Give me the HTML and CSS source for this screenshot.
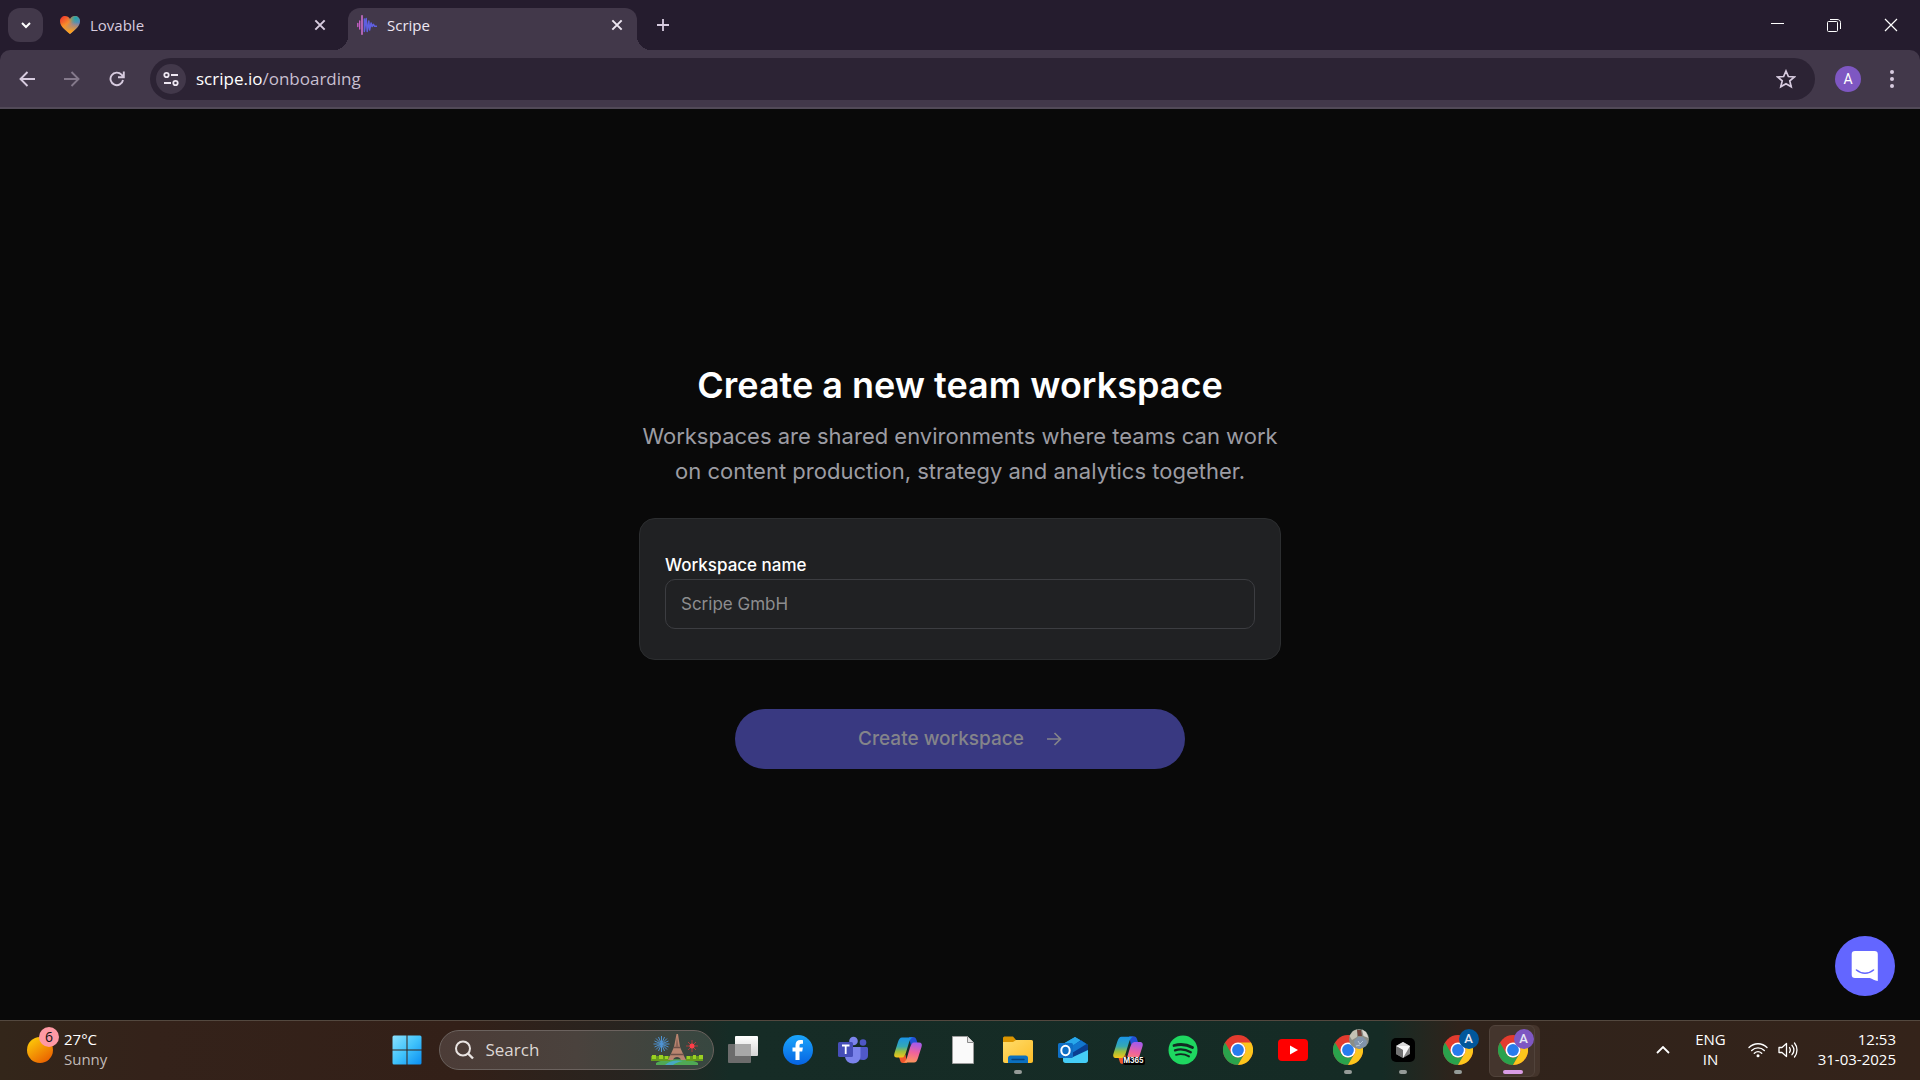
FILE: index.html
```html
<!DOCTYPE html>
<html lang="en">
<head>
<meta charset="utf-8">
<title>Scripe</title>
<link rel="stylesheet" href="styles.css">
</head>
<body>
<svg class="defs" aria-hidden="true">
  <defs>
    <linearGradient id="win" x1="0" y1="0" x2="1" y2="1"><stop offset="0" stop-color="#8be1fd"/><stop offset=".5" stop-color="#41c3fb"/><stop offset="1" stop-color="#0a8ef2"/></linearGradient>
    <linearGradient id="fb" x1="0" y1="0" x2="0" y2="1"><stop offset="0" stop-color="#1aa5fb"/><stop offset="1" stop-color="#0663e2"/></linearGradient>
    <linearGradient id="sun" x1="0" y1="0" x2=".7" y2="1"><stop offset="0" stop-color="#ffd60a"/><stop offset="1" stop-color="#ea6200"/></linearGradient>
    <linearGradient id="cpL" x1="0" y1="0" x2="0" y2="1"><stop offset="0" stop-color="#1a94e8"/><stop offset=".45" stop-color="#35a9b4"/><stop offset=".7" stop-color="#9bbf3c"/><stop offset="1" stop-color="#f7c51a"/></linearGradient>
    <linearGradient id="cpR" x1=".4" y1="0" x2=".2" y2="1"><stop offset="0" stop-color="#a85be8"/><stop offset=".45" stop-color="#f0629c"/><stop offset="1" stop-color="#fd9b55"/></linearGradient>
    <linearGradient id="folder" x1="0" y1="0" x2="1" y2="1"><stop offset="0" stop-color="#ffdc6b"/><stop offset="1" stop-color="#fdbd27"/></linearGradient>
    <linearGradient id="heart" x1=".1" y1="0" x2=".9" y2=".8"><stop offset="0" stop-color="#f0372b"/><stop offset=".42" stop-color="#f58a2e"/><stop offset=".62" stop-color="#8b83a5"/><stop offset="1" stop-color="#3b74e8"/></linearGradient>
    <linearGradient id="heartBase" x1="0" y1="0" x2="0" y2="1"><stop offset=".35" stop-color="#ff9f1c" stop-opacity="0"/><stop offset=".85" stop-color="#ff9f1c"/></linearGradient>
    <radialGradient id="heartTop" cx=".78" cy=".12" r=".4"><stop offset="0" stop-color="#15a6b4"/><stop offset="1" stop-color="#15a6b4" stop-opacity="0"/></radialGradient>
    <linearGradient id="view" x1="0" y1="0" x2="0" y2="1"><stop offset="0" stop-color="#fff"/><stop offset="1" stop-color="#d4d4d4"/></linearGradient>
    <symbol id="chrome" viewBox="0 0 30 30">
      <circle cx="15" cy="15" r="15" fill="#e33b2e"/>
      <path d="M2 7.500a15 15 0 0 0 13 22.500l6.500-11.250a7.500 7.500 0 0 1-13 0z" fill="#2aa24c"/>
      <path d="M15 30A15 15 0 0 0 28 7.500H15a7.500 7.500 0 0 1 6.500 11.250z" fill="#fcc61c"/>
      <circle cx="15" cy="15" r="7.500" fill="#fff"/><circle cx="15" cy="15" r="5.900" fill="#287bec"/>
    </symbol>
    <symbol id="copilot" viewBox="0 0 30 30">
      <path d="M16 2h4c2 0 3 1 3.500 3l1 3h-3c-2 0-3 1-3.500 3z" fill="#2250d6"/>
      <path d="M14 28h-4c-2 0-2.500-1-3-3l-1-3h3c2 0 3-1 3.500-3z" fill="#f0562c"/>
      <path d="M20 2.500H9C7 2.500 6 4 5 7L1.500 18c-1 3 0 4.500 2.500 4.500h5c2 0 3-2 4-5l3-10c1-3 2-4.500 4-5z" fill="url(#cpL)"/>
      <path d="M10 27.500h11c2 0 3-1.500 4-4.500l3.500-11c1-3 0-4.500-2.500-4.500h-5c-2 0-3 2-4 5l-3 10c-1 3-2 4.500-4 5z" fill="url(#cpR)"/>
    </symbol>
    <symbol id="close" viewBox="0 0 12 12"><path d="M2 2l8 8M10 2l-8 8" fill="none" stroke="currentColor" stroke-width="1.700"/></symbol>
  </defs>
</svg>

<div class="window">
  <header class="browser">
    <div class="tabstrip">
      <button class="tab-search" aria-label="Search tabs"><svg width="12" height="12" viewBox="0 0 12 12"><path d="M2 4l4 4 4-4" fill="none" stroke="currentColor" stroke-width="2"/></svg></button>
      <div class="tab">
        <svg width="20" height="20" viewBox="0 0 20 20">
          <path d="M10 19C6 15.500 0 11.500 0 6.200C0 3 2.400 1 5 1c2.200 0 4 1 5 3 1-2 2.800-3 5-3 2.600 0 5 2 5 5.200C20 11.500 14 15.500 10 19z" fill="url(#heart)"/>
          <path d="M10 19C6 15.500 0 11.500 0 6.200C0 3 2.400 1 5 1c2.200 0 4 1 5 3 1-2 2.800-3 5-3 2.600 0 5 2 5 5.200C20 11.500 14 15.500 10 19z" fill="url(#heartTop)"/>
          <path d="M10 19C6 15.500 0 11.500 0 6.200C0 3 2.400 1 5 1c2.200 0 4 1 5 3 1-2 2.800-3 5-3 2.600 0 5 2 5 5.200C20 11.500 14 15.500 10 19z" fill="url(#heartBase)"/>
        </svg>
        <span class="tab-title">Lovable</span>
        <button class="tab-close" aria-label="Close Lovable"><svg width="14" height="14"><use href="#close"/></svg></button>
      </div>
      <div class="tab tab-active">
        <svg width="20" height="20" viewBox="0 0 20 20" fill="none" stroke-linecap="round" stroke-linejoin="round">
          <path d="M.8 8.500v3M2.700 6v8" stroke="#cf62cf" stroke-width="1.300"/><path d="M5 .8v18.400" stroke="#d873d6" stroke-width="1.500"/>
          <path d="M7.400 4v12.500l1.800-13 1 13 1.600-10.500.8 9 1.500-7 1 3.500 1.300-2.200 1.200 2h2" stroke="#5f5fe0" stroke-width="1.500"/>
        </svg>
        <span class="tab-title">Scripe</span>
        <button class="tab-close" aria-label="Close Scripe"><svg width="14" height="14"><use href="#close"/></svg></button>
      </div>
      <button class="new-tab" aria-label="New tab"><svg width="14" height="14" viewBox="0 0 14 14"><path d="M7 1v12M1 7h12" stroke="currentColor" stroke-width="1.800"/></svg></button>
      <div class="window-controls">
        <button aria-label="Minimize"><svg width="14" height="14" viewBox="0 0 14 14"><path d="M1 5.500h13" stroke="#fff"/></svg></button>
        <button aria-label="Restore"><svg width="14" height="14" viewBox="0 0 14 14" fill="none" stroke="#fff"><path d="M3 1.500h7c2 0 3.500 1 3.500 3V11"/><rect x=".5" y="3.500" width="10" height="10" rx="1"/></svg></button>
        <button aria-label="Close window"><svg width="14" height="14" viewBox="0 0 14 14"><path d="M1 1l12 12M13 1L1 13" stroke="#fff" stroke-width="1.200"/></svg></button>
      </div>
    </div>
    <div class="toolbar">
      <button class="nav" aria-label="Back"><svg width="16" height="16" viewBox="0 0 16 16"><path d="M16 8H2M8.500 1L1.500 8l7 7" fill="none" stroke="currentColor" stroke-width="1.900"/></svg></button>
      <button class="nav nav-off" aria-label="Forward" disabled><svg width="16" height="16" viewBox="0 0 16 16"><path d="M0 8h14M7.500 1l7 7-7 7" fill="none" stroke="currentColor" stroke-width="1.900"/></svg></button>
      <button class="nav" aria-label="Reload"><svg width="16" height="16" viewBox="0 0 16 16"><path d="M14 9a6.300 6.300 0 1 1-1.500-5.300L14.500 6M14.800 .5v5.700H9" fill="none" stroke="currentColor" stroke-width="1.900"/></svg></button>
      <div class="omnibox">
        <button class="site-info" aria-label="View site information"><svg width="16" height="16" viewBox="0 0 16 16" fill="none" stroke="currentColor" stroke-width="1.800"><circle cx="3.500" cy="4" r="2.200"/><path d="M8 4h7M1 12h7"/><circle cx="12.500" cy="12" r="2.200"/></svg></button>
        <a class="url" href="#"><span class="host">scripe.io</span>/onboarding</a>
        <button class="star" aria-label="Bookmark this tab"><svg width="20" height="20" viewBox="0 0 20 20"><path d="M10 2l2.400 5.500 5.900.5-4.500 3.900 1.400 5.900L10 14.700l-5.200 3.100 1.400-5.900L1.700 8l5.900-.5z" fill="none" stroke="currentColor" stroke-width="1.700"/></svg></button>
      </div>
      <button class="profile" aria-label="Profile">A</button>
      <button class="menu" aria-label="Menu"><svg width="6" height="18" viewBox="0 0 6 18" fill="currentColor"><circle cx="3" cy="2" r="2"/><circle cx="3" cy="9" r="2"/><circle cx="3" cy="16" r="2"/></svg></button>
    </div>
  </header>

  <main class="page">
    <form class="onboarding">
      <h1>Create a new team workspace</h1>
      <p>Workspaces are shared environments where teams can work<br>on content production, strategy and analytics together.</p>
      <div class="card">
        <label for="workspace">Workspace name</label>
        <input id="workspace" type="text" placeholder="Scripe GmbH">
      </div>
      <button class="submit" type="button" disabled>Create workspace
        <svg width="16" height="16" viewBox="0 0 16 16"><path d="M1 8h13M8.500 2l6 6-6 6" fill="none" stroke="currentColor" stroke-width="1.700"/></svg>
      </button>
    </form>
    <button class="chat" aria-label="Open chat"><svg width="28" height="32" viewBox="0 0 28 32"><path d="M4 1h19.500a3.300 3.300 0 0 1 3.300 3.300V31c-3-.5-5.500-2-8-3H4a3.300 3.300 0 0 1-3.300-3.300V4.300A3.300 3.300 0 0 1 4 1z" fill="#fff"/><path d="M5.500 20c5 4.300 12 4.300 17 0" fill="none" stroke="#6366ff" stroke-width="1.600" stroke-linecap="round"/></svg></button>
  </main>

  <footer class="taskbar">
    <button class="weather">
      <span class="sun"><svg width="26" height="26" viewBox="0 0 26 26"><circle cx="13" cy="13" r="13" fill="url(#sun)"/></svg><span class="count">6</span></span>
      <span class="weather-text"><span>27°C</span><span class="dim">Sunny</span></span>
    </button>
    <div class="apps">
      <button class="app" aria-label="Start"><svg width="30" height="30" viewBox="0 0 30 30" fill="url(#win)"><path d="M2 .5h12.500v14H.500V2A1.500 1.500 0 0 1 2 .5zM15.500.5H28A1.500 1.500 0 0 1 29.500 2v12.500h-14zM.5 15.500h14v14H2A1.500 1.500 0 0 1 .5 28zM15.500 15.500h14V28a1.500 1.500 0 0 1-1.500 1.500H15.500z"/></svg></button>
      <button class="search">
        <svg width="20" height="20" viewBox="0 0 20 20"><circle cx="9" cy="8.500" r="7" fill="none" stroke="#e9e4e2" stroke-width="2"/><path d="M14 13.500l5 5" stroke="#e9e4e2" stroke-width="2.400"/></svg>
        <span>Search</span>
        <svg class="paris" width="52" height="32" viewBox="0 0 52 32">
          <path d="M10.500 2v16M2.500 10h16M5 4.500l11 11M16 4.500l-11 11M7.500 3l6 14M13.500 3l-6 14M3.500 7l14 6M17.500 7l-14 6" stroke="#4f93d2" stroke-width="1"/>
          <path d="M41 6v12M35 12h12M37 8l8 8M45 8l-8 8" stroke="#ad3d3d" stroke-width="1"/><circle cx="41" cy="12" r="2.500" fill="#ff3d48"/>
          <path d="M5 29c8-5 34-5 42 0v2H5z" fill="#50a955"/><path d="M14 31c6-5 11-5 18-4-5 1-8 2-10 4z" fill="#47a9c4"/>
          <path d="M0 22h19v5H0zM35 22h17v5H35z" fill="#659c1d"/><path d="M1 21h4v4H1zm7 0h4v4H8zm6 1h3v3h-3zm22 0h3v3h-3zm6-1h3v4h-3zm6 0h4v4h-4z" fill="#9bd022"/>
          <path d="M25.500 0h1.500l2 13 4 9 2 4h-5c-1-4-7-4-8 0h-5l2-4 4-9z" fill="#b98570"/><path d="M22.500 13.500h7M20 20.500h13" stroke="#6e5148" stroke-width="1.300"/><path d="M26 3l-1.500 10h3z" fill="#8e6557"/>
        </svg>
      </button>
      <button class="app" aria-label="Task view"><svg width="30" height="30" viewBox="0 0 30 30"><rect x="0" y="9" width="23" height="19" rx="1" fill="#6c6c6c"/><rect x="7" y="1" width="23" height="20" rx="1" fill="url(#view)"/><path d="M7 9h16v12H7z" fill="#a8a8a8"/></svg></button>
      <button class="app" aria-label="Facebook"><svg width="30" height="30" viewBox="0 0 30 30"><circle cx="15" cy="15" r="15" fill="url(#fb)"/><path d="M12.500 25v-8.500H9.500v-4h3v-2.300C12.500 6.800 14.300 5 17.500 5c1 0 1.800.1 2.500.2v3.500h-1.500c-1.600 0-2 .8-2 2v1.800h3.400l-.7 4h-2.700V25z" fill="#fff"/></svg></button>
      <button class="app" aria-label="Teams"><svg width="30" height="30" viewBox="0 0 30 30"><circle cx="25" cy="7.500" r="3.300" fill="#4f57c6"/><circle cx="15.500" cy="6" r="4.300" fill="#7b83eb"/><path d="M20 12h8.500c.8 0 1.500.7 1.500 1.500V20c0 3.500-2 5-5 5s-5-1-5-1z" fill="#5059c9"/><path d="M7 12h15.500v9c0 4.500-3 7.500-7.500 7.500S7 25.500 7 21z" fill="#7b83eb"/><rect y="7" width="15" height="15" rx="1.500" fill="#464eb8"/><path d="M4 10.500h7.500M7.700 10.500V19" stroke="#fff" stroke-width="1.800"/></svg></button>
      <button class="app" aria-label="Copilot"><svg width="30" height="30"><use href="#copilot"/></svg></button>
      <button class="app" aria-label="Document"><svg width="22" height="28" viewBox="0 0 22 28"><path d="M.5.5h15l6 6v21H.5z" fill="#fafafa" stroke="#9c9c9c"/><path d="M15.500.5v6h6" fill="#e4e4e4" stroke="#8a8a8a"/></svg></button>
      <button class="app open" aria-label="File Explorer"><svg width="30" height="28" viewBox="0 0 30 28"><path d="M0 10V2C0 1 1 .5 2 .5h8L13 4h15c1.200 0 2 .8 2 2v5z" fill="#dc9500"/><path d="M0 6h10l3-2h15c1.200 0 2 .8 2 2v19c0 1-.7 2-2 2H2c-1.200 0-2-1-2-2z" fill="url(#folder)"/><path d="M5 27v-5c0-1.500 1-2.500 2.500-2.500h15c1.500 0 2.500 1 2.500 2.500v5z" fill="#0b70c0"/><path d="M9 23.500h12" stroke="#05427c" stroke-width="1.400" stroke-linecap="round"/></svg></button>
      <button class="app" aria-label="Outlook"><svg width="30" height="28" viewBox="0 0 30 28"><path d="M5 8L17 1l13 8v12L17 27 5 22z" fill="#1490df"/><path d="M5 8L17 1l6 3.500L10 12z" fill="#28a8ea"/><path d="M23 4l7 5v6l-14 8-5-10z" fill="#0a3f91"/><path d="M12 11l11-6.500 5.500 3.500L14 17z" fill="#1277cf"/><path d="M30 14v10.500c0 1.500-1 2.500-2.500 2.500H7.500C6 27 5 26 5 24.500V22l10-1z" fill="#45cdf6"/><rect y="7" width="15" height="15" rx="1.500" fill="#0f6fc5"/><ellipse cx="7.500" cy="14.500" rx="4.200" ry="4.700" fill="none" stroke="#fff" stroke-width="2"/></svg></button>
      <button class="app m365" aria-label="Microsoft 365 Copilot"><svg width="32" height="32"><use href="#copilot"/></svg><span class="m365-label">M365</span></button>
      <button class="app" aria-label="Spotify"><svg width="30" height="30" viewBox="0 0 30 30"><circle cx="15" cy="15" r="14.500" fill="#1ed760"/><path d="M6 10.500c6-1.700 13-1 18.500 2" fill="none" stroke="#112a22" stroke-width="2.800" stroke-linecap="round"/><path d="M7 15.300c5-1.500 11-.8 15.800 1.900" fill="none" stroke="#112a22" stroke-width="2.300" stroke-linecap="round"/><path d="M8 19.800c4.500-1.200 9-.7 13 1.600" fill="none" stroke="#112a22" stroke-width="1.900" stroke-linecap="round"/></svg></button>
      <button class="app" aria-label="Chrome"><svg width="30" height="30"><use href="#chrome"/></svg></button>
      <button class="app" aria-label="YouTube"><svg width="30" height="22" viewBox="0 0 30 22"><rect width="30" height="22" rx="4" fill="#f00"/><path d="M12 6.500v9l8-4.500z" fill="#fff"/></svg></button>
      <button class="app open" aria-label="Chrome, photo profile"><svg width="30" height="30"><use href="#chrome"/></svg><span class="badge"><svg width="20" height="20" viewBox="0 0 20 20"><circle cx="10" cy="10" r="10" fill="#8b8e86"/><path d="M4 2l4-1.500V8L3 11 .5 7z" fill="#c4c2b4"/><path d="M8 1h4l1 6H9z" fill="#71433a"/><path d="M13 .5l4 2.500 2.500 6-5-2z" fill="#dad7d0"/><path d="M5 12l4-4h5l4 4-1 5-7 3-4-3z" fill="#8294aa"/><path d="M9 12l2 3 3-3M7 17l4-1" stroke="#b9c8d8" fill="none"/></svg></span></button>
      <button class="app open" aria-label="Cursor"><svg width="24" height="24" viewBox="0 0 24 24"><rect width="24" height="24" rx="5" fill="#000"/><path d="M12 4l7 4v8l-7 4-7-4V8z" fill="#868686"/><path d="M5 8l7-4 7 4-7 4z" fill="#d8d8d8"/><path d="M5 8h14l-7 12v-8z" fill="#f7f7f7"/><path d="M12 12v8l-7-4V8z" fill="#727272"/></svg></button>
      <button class="app open" aria-label="Chrome, profile A"><svg width="30" height="30"><use href="#chrome"/></svg><span class="badge badge-blue">A</span></button>
      <button class="app open current" aria-label="Chrome, active window"><svg width="30" height="30"><use href="#chrome"/></svg><span class="badge badge-purple">A</span></button>
    </div>
    <div class="tray">
      <button class="tray-more" aria-label="Show hidden icons"><svg width="14" height="8" viewBox="0 0 14 8"><path d="M1 7l6-6 6 6" fill="none" stroke="#fff" stroke-width="1.800"/></svg></button>
      <button class="language"><span>ENG</span><span>IN</span></button>
      <button class="status" aria-label="Network and volume">
        <svg width="20" height="18" viewBox="0 0 20 18" fill="none" stroke="#fff" stroke-width="1.400" stroke-linecap="round"><path d="M1 6.500c5-5 13-5 18 0M3.700 9.500c3.500-3.500 9.100-3.500 12.600 0M6.300 12.300c2.200-2 5.200-2 7.400 0"/><circle cx="10" cy="14.700" r="1.500" fill="#fff" stroke="none"/></svg>
        <svg width="20" height="18" viewBox="0 0 20 18" fill="none" stroke="#fff" stroke-width="1.300" stroke-linecap="round" stroke-linejoin="round"><path d="M1 6.500h3L8.500 2.500v13L4 11.500H1zM11.500 6.500c1 1.500 1 3.500 0 5M14 4.300c2.300 2.800 2.300 6.600 0 9.400M16.500 2c3.300 4 3.300 10 0 14"/></svg>
      </button>
      <button class="clock"><span>12:53</span><span>31-03-2025</span></button>
    </div>
  </footer>
</div>
</body>
</html>
```
FILE: styles.css
```css
* { box-sizing: border-box; }
body { margin: 0; background: #090909; }
button { border: 0; padding: 0; margin: 0; background: none; color: inherit; font: inherit; }
svg { display: block; flex: none; }
.defs { position: absolute; width: 0; height: 0; }

.window { display: flex; flex-direction: column; min-height: 100vh; font-family: "Open Sans", "Noto Sans", sans-serif; }

/* Browser chrome */
.browser { background: #251c2e; color: #d7cbdf; }
.tabstrip { display: flex; height: 50px; padding: 8px 1px 0 8px; }
.tab-search { display: grid; place-items: center; width: 35px; height: 34px; border-radius: 12px; background: #42384a; color: #fff; }
.tab { display: flex; align-items: center; width: 289px; height: 42px; padding: 0 12px 8px 9px; gap: 10px; font-size: 15px; }
.tab:not(.tab-active) { width: 288px; margin-left: 8px; margin-right: 9px; padding-right: 11px; }
.tab-title { flex: 1; }
.tab-close { display: grid; place-items: center; width: 16px; height: 16px; }
.tab-active { position: relative; background: #42384a; color: #eee7f2; border-radius: 12px 12px 0 0; }
.tab-active::before, .tab-active::after { content: ""; position: absolute; bottom: 0; width: 14px; height: 14px; }
.tab-active::before { right: 100%; background: radial-gradient(circle at 0 0, transparent 14px, #42384a 14px); }
.tab-active::after { left: 100%; background: radial-gradient(circle at 100% 0, transparent 14px, #42384a 14px); }
.new-tab { display: grid; place-items: center; width: 34px; height: 34px; margin-left: 9px; }
.window-controls { display: flex; margin: -8px 0 0 auto; }
.window-controls button { display: grid; place-items: center; width: 57px; height: 50px; }

.toolbar { display: flex; align-items: center; height: 59px; padding: 0 21px 0 19px; background: #42384a; border-bottom: 2px solid #524a58; border-radius: 10px 10px 0 0; color: #d7cbdf; }
.nav { margin-right: 29px; }
.nav-off { color: #84798b; }
.omnibox { display: flex; flex: 1; align-items: center; height: 42px; margin-left: -4px; padding: 0 19px 0 6px; border-radius: 21px; background: #2c2334; }
.site-info { display: grid; place-items: center; width: 30px; height: 30px; border-radius: 50%; background: #42384a; color: #eee7f2; }
.url { flex: 1; margin-left: 10px; color: #c8bfd0; font-size: 17px; text-decoration: none; }
.host { color: #fff; }
.profile { width: 26px; height: 26px; margin: 0 24px 0 20px; border-radius: 50%; background: #7e57c2; color: #fff; font: 14px/26px Roboto, sans-serif; }
.menu { width: 14px; display: grid; place-items: center; }

/* Onboarding page */
.page { position: relative; display: grid; place-items: center; flex: 1; padding-top: 2px; background: #090909; font-family: Inter, sans-serif; }
.onboarding { display: flex; flex-direction: column; align-items: center; width: 642px; max-width: 100%; }
h1 { margin: 0; color: #fff; font-size: 36px; line-height: 45px; font-weight: 600; white-space: nowrap; }
p { margin: 11px 0 29px; color: #9c9ca3; font-size: 22px; line-height: 35px; text-align: center; white-space: nowrap; }
.card { display: flex; flex-direction: column; align-self: stretch; padding: 32px 25px 30px; border: 1px solid #2c2e30; border-radius: 16px; background: #202123; }
.card label { color: #fff; font-size: 17px; line-height: 28px; font-weight: 500; }
.card input { height: 50px; padding: 0 15px; border: 1px solid #3c3d41; border-radius: 10px; background: transparent; color: #fff; font: 17px Inter, sans-serif; }
.card input::placeholder { color: #8d8d8f; opacity: 1; }
.submit { display: flex; align-items: center; justify-content: center; gap: 22px; width: 450px; height: 60px; margin-top: 49px; border-radius: 30px; background: #393981; color: #84848a; font-size: 19px; font-weight: 500; }
.chat { position: absolute; right: 25px; bottom: 24px; display: grid; place-items: center; width: 60px; height: 60px; border-radius: 50%; background: #6366ff; }

/* Taskbar */
.taskbar { display: grid; grid-template-columns: 1fr auto 1fr; align-items: center; height: 60px; padding-bottom: 2px; border-top: 1px solid #53483f; color: #fff; font-size: 15px; line-height: 20px; background: linear-gradient(90deg, #33261a 0%, #34221a 8%, #332018 24%, #272420 33%, #162c26 38%, #152b25 72%, #30231b 76%, #34231a 100%); }
.weather { display: flex; align-items: center; gap: 11px; padding-left: 27px; text-align: left; justify-self: start; }
.sun { position: relative; }
.count { position: absolute; left: 12px; top: -10px; width: 20px; height: 20px; border-radius: 50%; background: #ff99a4; color: #111; text-align: center; font-size: 14px; }
.weather-text, .language, .clock { display: flex; flex-direction: column; padding-bottom: 2px; }
.dim { color: #c2bbb8; }
.apps { display: flex; align-items: center; }
.app { position: relative; display: grid; place-items: center; width: 55px; height: 50px; }
.search { display: flex; align-items: center; width: 275px; height: 40px; margin: 0 2px 0 4px; padding: 0 10px 0 14px; gap: 12px; border: 1px solid #6b625e; border-radius: 20px; background: linear-gradient(90deg, #4c3c37, #4a423d 50%, #374740); color: #ddd7d4; font-size: 17px; }
.paris { margin-left: auto; }
.open::after { content: ""; position: absolute; bottom: 1px; left: 50%; width: 8px; height: 4px; margin-left: -4px; border-radius: 2px; background: #959b98; }
.current::after { width: 20px; margin-left: -10px; background: #d99ce5; }
.current { z-index: 0; }
.current::before { content: ""; position: absolute; z-index: -1; left: 3px; top: 0; width: 44px; height: 50px; border-radius: 6px; background: #44352d; border: 1px solid #51433b; box-shadow: 5px 0 0 #44342b; }
.badge { position: absolute; left: 28px; top: 4px; width: 20px; height: 20px; border-radius: 50%; color: #e5e8f4; font: 500 13px/20px Roboto, sans-serif; text-align: center; }
.badge-blue { background: #01579b; }
.badge-purple { background: #7e57c2; }
.m365-label { position: absolute; left: 22px; bottom: 10px; padding: 0 1px; border-radius: 2px; background: #000; font: 700 7px/8px Inter, sans-serif; }
.tray { display: flex; align-items: center; justify-self: end; padding-right: 24px; }
.language { align-items: center; margin: 0 22px 0 25px; }
.status { display: flex; gap: 10px; }
.clock { align-items: flex-end; margin-left: 20px; }
```
